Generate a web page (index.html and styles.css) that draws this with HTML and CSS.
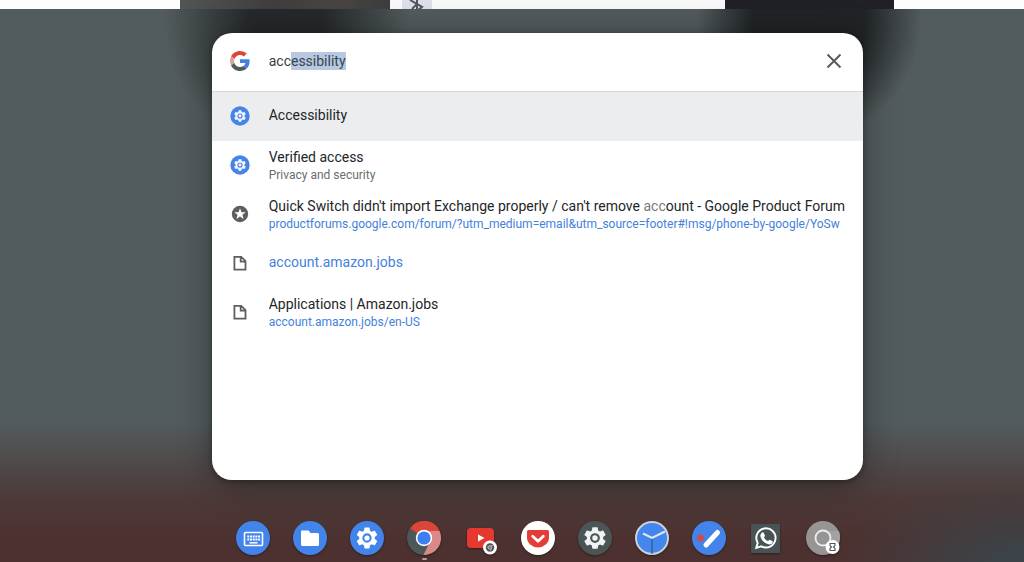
FILE: index.html
```html
<!DOCTYPE html>
<html lang="en">
<head>
<meta charset="utf-8">
<title>Launcher</title>
<link rel="stylesheet" href="styles.css">
</head>
<body>
<svg class="defs" aria-hidden="true">
  <symbol id="gear" viewBox="0 0 24 24"><path fill="currentColor" fill-rule="evenodd" d="M19.43 12.98c.04-.32.07-.64.07-.98s-.03-.66-.07-.98l2.110-1.650c.19-.15.24-.42.12-.64l-2-3.460c-.12-.22-.39-.3-.61-.22l-2.490 1c-.52-.4-1.080-.73-1.690-.98l-.38-2.650A.49.49 0 0 0 14 2h-4c-.25 0-.46.18-.49.42l-.38 2.650c-.61.25-1.170.59-1.690.98l-2.490-1c-.23-.09-.49 0-.61.22l-2 3.460c-.13.22-.07.49.12.64l2.110 1.650c-.04.32-.07.65-.07.98s.03.66.07.98l-2.110 1.650c-.19.15-.24.42-.12.64l2 3.460c.12.22.39.3.61.22l2.490-1c.52.4 1.080.73 1.690.98l.38 2.650c.03.24.24.42.49.42h4c.25 0 .46-.18.49-.42l.38-2.650c.61-.25 1.170-.59 1.690-.98l2.490 1c.23.09.49 0 .61-.22l2-3.460c.12-.22.07-.49-.12-.64zM12 16.500a4.500 4.500 0 1 1 0-9 4.500 4.500 0 0 1 0 9z"/><circle cx="12" cy="12" r="2.500" fill="currentColor"/></symbol>
  <symbol id="page" viewBox="0 0 20 20"><path fill="none" stroke="#5b5f61" stroke-width="1.800" d="M4.400 3.800h6.800l4.300 4.300v8.600H4.400zM10.700 4v4.700h4.600"/></symbol>
  <symbol id="settings" viewBox="0 0 20 20"><circle cx="10" cy="10" r="9.700" fill="#4684e8"/><use href="#gear" x="3" y="3" width="14" height="14" color="#f4f8fe"/></symbol>
</svg>

<div class="windows">
  <div></div><div class="win-gray"></div>
  <div class="win-light"><span class="bluetooth"><svg viewBox="0 0 24 14"><path d="M5 0l12 7-5 4V-5M7 9l5-5" fill="none" stroke="#50565c" stroke-width="2"/></svg></span></div>
  <div class="win-dark"></div><div></div>
</div>

<div class="desktop">
  <main class="launcher">
    <form class="search">
      <svg class="icon" viewBox="0 0 48 48"><path fill="#d9463c" d="M24 9.500c3.540 0 6.710 1.220 9.210 3.600l6.850-6.850C35.900 2.380 30.470 0 24 0 14.620 0 6.510 5.380 2.560 13.220l7.980 6.190C12.430 13.720 17.740 9.500 24 9.500z"/><path fill="#4480e4" d="M46.980 24.550c0-1.570-.15-3.090-.38-4.550H24v9.020h12.940c-.58 2.960-2.260 5.480-4.780 7.180l7.730 6c4.510-4.180 7.090-10.360 7.090-17.650z"/><path fill="#e0a09e" d="M10.530 28.590A14.500 14.500 0 0 1 9.770 24c0-1.600.27-3.140.76-4.590l-7.980-6.190A23.900 23.900 0 0 0 0 24c0 3.880.92 7.540 2.560 10.780z"/><path fill="#505b5d" d="M24 48c6.480 0 11.930-2.130 15.890-5.810l-7.730-6c-2.150 1.450-4.920 2.300-8.160 2.300-6.260 0-11.570-4.220-13.470-9.910l-7.980 6.190C6.510 42.620 14.620 48 24 48z"/></svg>
      <input id="query" class="query" type="text" aria-label="Search" value="accessibility" autocomplete="off" spellcheck="false">
      <button class="clear" type="button" aria-label="Clear"><svg viewBox="0 0 16 16"><path d="M1.500 1.500l13 13M14.500 1.500l-13 13" stroke="#55595b" stroke-width="1.900"/></svg></button>
    </form>
    <ul class="results">
      <li><a class="result selected" href="#accessibility"><svg class="icon"><use href="#settings"/></svg><span class="text"><span class="title">Accessibility</span></span></a></li>
      <li><a class="result" href="#verified"><svg class="icon"><use href="#settings"/></svg><span class="text"><span class="title">Verified access</span><span class="detail">Privacy and security</span></span></a></li>
      <li><a class="result" href="#forums"><svg class="icon" viewBox="0 0 20 20"><circle cx="10" cy="10" r="8.200" fill="#5b5f61"/><path fill="#fff" d="M10 4.200l1.500 4h4.200l-3.300 2.600 1.200 4.100-3.600-2.400-3.600 2.400 1.200-4.100-3.300-2.600h4.200z"/></svg><span class="text"><span class="title">Quick Switch didn't import Exchange properly / can't remove <span class="match">acc</span>ount - Google Product Forum</span><span class="detail url">productforums.google.com/forum/?utm_medium=email&amp;utm_source=footer#!msg/phone-by-google/YoSw</span></span></a></li>
      <li><a class="result" href="#jobs"><svg class="icon"><use href="#page"/></svg><span class="text"><span class="title url">account.amazon.jobs</span></span></a></li>
      <li><a class="result" href="#applications"><svg class="icon"><use href="#page"/></svg><span class="text"><span class="title">Applications | Amazon.jobs</span><span class="detail url">account.amazon.jobs/en-US</span></span></a></li>
    </ul>
  </main>

  <nav class="shelf" aria-label="Shelf">
    <button class="app" aria-label="Keyboard"><svg viewBox="0 0 34 34"><circle cx="17" cy="17" r="17" fill="#4384eb"/><rect x="8.500" y="11.500" width="18" height="13" rx="1" fill="none" stroke="#fff" stroke-width="1.600"/><path d="M11.300 15.500h12.800M11.300 18.500h12.800" stroke="#fff" stroke-width="2" stroke-dasharray="2 .7"/><path d="M13.500 21.800h8" stroke="#fff" stroke-width="1.500"/></svg></button>
    <button class="app" aria-label="Files"><svg viewBox="0 0 34 34"><circle cx="17" cy="17" r="17" fill="#4384eb"/><path fill="#fff" d="M9 9.500h6.500l2 2.500h7q1.500 0 1.500 1.500v10q0 1.500-1.500 1.500h-15Q8 25 8 23.500v-13q0-1 1-1z"/></svg></button>
    <button class="app" aria-label="Settings"><svg viewBox="0 0 34 34"><circle cx="17" cy="17" r="17" fill="#4384eb"/><use href="#gear" x="4.500" y="4.500" width="25" height="25" color="#fff"/></svg></button>
    <button class="app running" aria-label="Chrome"><svg viewBox="0 0 34 34"><circle cx="17" cy="17" r="17" fill="#4c5758"/><path fill="#dc4539" d="M17 17L3.100 7.300A17 17 0 0 1 32.900 10.800L17 10z"/><path fill="#da8987" d="M17 10h15.500A17 17 0 0 1 16.500 34L23 20.500z"/><path fill="#dc4539" d="M17 9.800V0A17 17 0 0 1 32.300 9.800z"/><circle cx="17" cy="17" r="8.200" fill="#fff"/><circle cx="17" cy="17" r="6.600" fill="#3c7ff0"/></svg></button>
    <button class="app" aria-label="YouTube"><svg viewBox="0 0 34 34"><rect x="3" y="7" width="27" height="20" rx="4" fill="#e5392f"/><path d="M14 13.500v7l6.500-3.500z" fill="#fff"/><circle cx="26" cy="26.500" r="7" fill="#fff"/><circle cx="26" cy="26.500" r="4.200" fill="#4c5354"/><circle cx="26" cy="26.500" r="1.800" fill="#777" stroke="#ddd" stroke-width=".7"/><path d="M26 24.500h4M24.300 27.500l-2-3M27.700 27.500l-2 3.200" stroke="#bbb" stroke-width=".6"/></svg></button>
    <button class="app" aria-label="Pocket"><svg viewBox="0 0 34 34"><circle cx="17" cy="17" r="17" fill="#fff"/><path fill="#e33e35" d="M7.500 9h19q1.500 0 1.500 1.500v6a11 10 0 0 1-22 0v-6q0-1.500 1.500-1.500z"/><path d="M11.700 15.200l5.300 5 5.300-5" fill="none" stroke="#fff" stroke-width="2.800" stroke-linecap="round" stroke-linejoin="round"/></svg></button>
    <button class="app" aria-label="System settings"><svg viewBox="0 0 34 34"><circle cx="17" cy="17" r="17" fill="#4c5556"/><use href="#gear" x="4" y="4" width="26" height="26" color="#f0f3f5"/></svg></button>
    <button class="app" aria-label="Clock"><svg viewBox="0 0 34 34"><circle cx="17" cy="17" r="16" fill="#4386ed" stroke="#ccd1d8" stroke-width="2"/><path d="M17 18v15" stroke="#304972" stroke-width="1"/><path d="M8 12.500l9 4.500 13-6.500" fill="none" stroke="#e3e9f2" stroke-width="2"/></svg></button>
    <button class="app" aria-label="Stylus notes"><svg viewBox="0 0 34 34"><circle cx="17" cy="17" r="17" fill="#4384eb"/><circle cx="8.500" cy="17" r="3.500" fill="#cd4c54"/><path d="M14 24L25.500 11.500" stroke="#fff" stroke-width="5" stroke-linecap="round"/></svg></button>
    <button class="app" aria-label="WhatsApp"><svg viewBox="0 0 34 34"><path fill="#475354" d="M2 3h29v29H2z"/><path d="M7.300 26.800l1.400-5A9.600 9.600 0 1 1 12.300 25.300z" fill="none" stroke="#fff" stroke-width="1.900"/><path fill="#fff" d="M12.700 11.800q1-1 2 0l1.300 3-1 1.600q1.300 2.500 4 3.700l1.700-1.400 3 1.500q.2 2.800-2.900 3.200c-5 .2-10.200-6-9.300-9.600z"/></svg></button>
    <button class="app" aria-label="Loading app"><svg viewBox="0 0 34 34"><circle cx="17" cy="17" r="17" fill="#979594"/><path d="M17 10h16a17 17 0 0 1-7 20z" fill="#a2a2a2"/><circle cx="17" cy="17" r="7.500" fill="#969494" stroke="#ececec" stroke-width="1.800"/><circle cx="26.500" cy="26" r="7" fill="#fff"/><path d="M24 22.500h5v2l-1.500 1.500 1.500 1.500v2h-5v-2l1.500-1.500-1.500-1.500z" fill="none" stroke="#555" stroke-width="1.100"/></svg></button>
  </nav>
</div>
<script src="launcher.js"></script>
</body>
</html>
```
FILE: styles.css
```css
* { box-sizing: border-box; }

body {
  margin: 0;
  min-height: 100vh;
  display: flex;
  flex-direction: column;
  overflow: hidden;
  font-family: Roboto, "Liberation Sans", sans-serif;
  color: #232628;
  background: #4d3431;
}

.defs { position: absolute; width: 0; height: 0; }
svg { display: block; }

.windows {
  display: grid;
  grid-template-columns: 180fr 210fr 335fr 169fr 130fr;
  height: 9px;
  background: #fdfdfd;
}
.win-gray { background: linear-gradient(90deg, #515554, #403e3e 45%, #494544 75%, #3d3d3d); }
.win-light { padding-left: 12px; background: #f8f8fa; }
.bluetooth { display: block; width: 30px; height: 9px; overflow: hidden; background: #dcdfe7; }
.bluetooth svg { width: 24px; height: 14px; margin-left: 3px; }
.win-dark { background: #1f2126; }

.desktop {
  flex: 1;
  display: flex;
  flex-direction: column;
  align-items: center;
  justify-content: space-between;
  padding: 24px 0 7px 5%;
  background:
    radial-gradient(ellipse 11% 120px at 79% 10px, #202427 50%, #20242700 100%),
    radial-gradient(ellipse 12% 130px at 28% 10px, #25292b 30%, #25292b00 100%),
    radial-gradient(ellipse 18% 80px at 100% 100%, #3c4348 15%, #3c434800 100%),
    linear-gradient(#525b5d 75%, #4f4d4c 81%, #4c3b39 88%, #4d3130 96%);
}

.launcher {
  width: 67%;
  min-height: 447px;
  border-radius: 20px;
  overflow: hidden;
  background: #fff;
  box-shadow: 0 2px 6px #0005, 0 4px 36px #0005;
}

.search {
  display: flex;
  align-items: center;
  gap: 19px;
  height: 59px;
  padding: 0 21px 2px 18px;
  border-bottom: 1px solid #d5d7d9;
}
.icon { flex: none; width: 20px; height: 20px; }
.query {
  flex: 1;
  min-width: 0;
  padding: 0;
  border: 0;
  outline: 0;
  background: none;
  font: 14px/18px Roboto, "Liberation Sans", sans-serif;
  color: #393c3e;
  caret-color: transparent;
}
.query::selection { background: #b7c8df; color: #354555; }
.clear { padding: 0; border: 0; background: none; }
.clear svg { width: 16px; height: 16px; }

.results { margin: 0; padding: 0; list-style: none; }
.result {
  display: flex;
  align-items: center;
  gap: 19px;
  height: 49px;
  padding: 0 16px 0 18px;
  color: inherit;
  text-decoration: none;
}
.result .icon { margin-bottom: 2px; }
.selected { background: #ebedee; }
.text { flex: 1; min-width: 0; }
.title, .detail { display: block; overflow: hidden; white-space: nowrap; }
.title { font-size: 14px; line-height: 19px; }
.title:only-child { padding-bottom: 2px; }
.detail { font-size: 12px; line-height: 17px; color: #6a6e70; }
.match { color: #777b7d; }
.text .url { color: #4481dc; }

.shelf { display: flex; gap: 23px; }
.app {
  display: block;
  position: relative;
  width: 34px;
  height: 34px;
  padding: 0;
  border: 0;
  background: none;
}
.app svg { width: 34px; height: 34px; filter: drop-shadow(0 1px 1px #0006); }
.running::after {
  content: "";
  position: absolute;
  left: 15px;
  bottom: -5px;
  width: 5px;
  height: 2px;
  border-radius: 1px;
  background: #aaa0a0;
}
```
FILE: launcher.js
```js
const query = document.getElementById("query");
query.focus();
query.setSelectionRange(3, query.value.length);
```
